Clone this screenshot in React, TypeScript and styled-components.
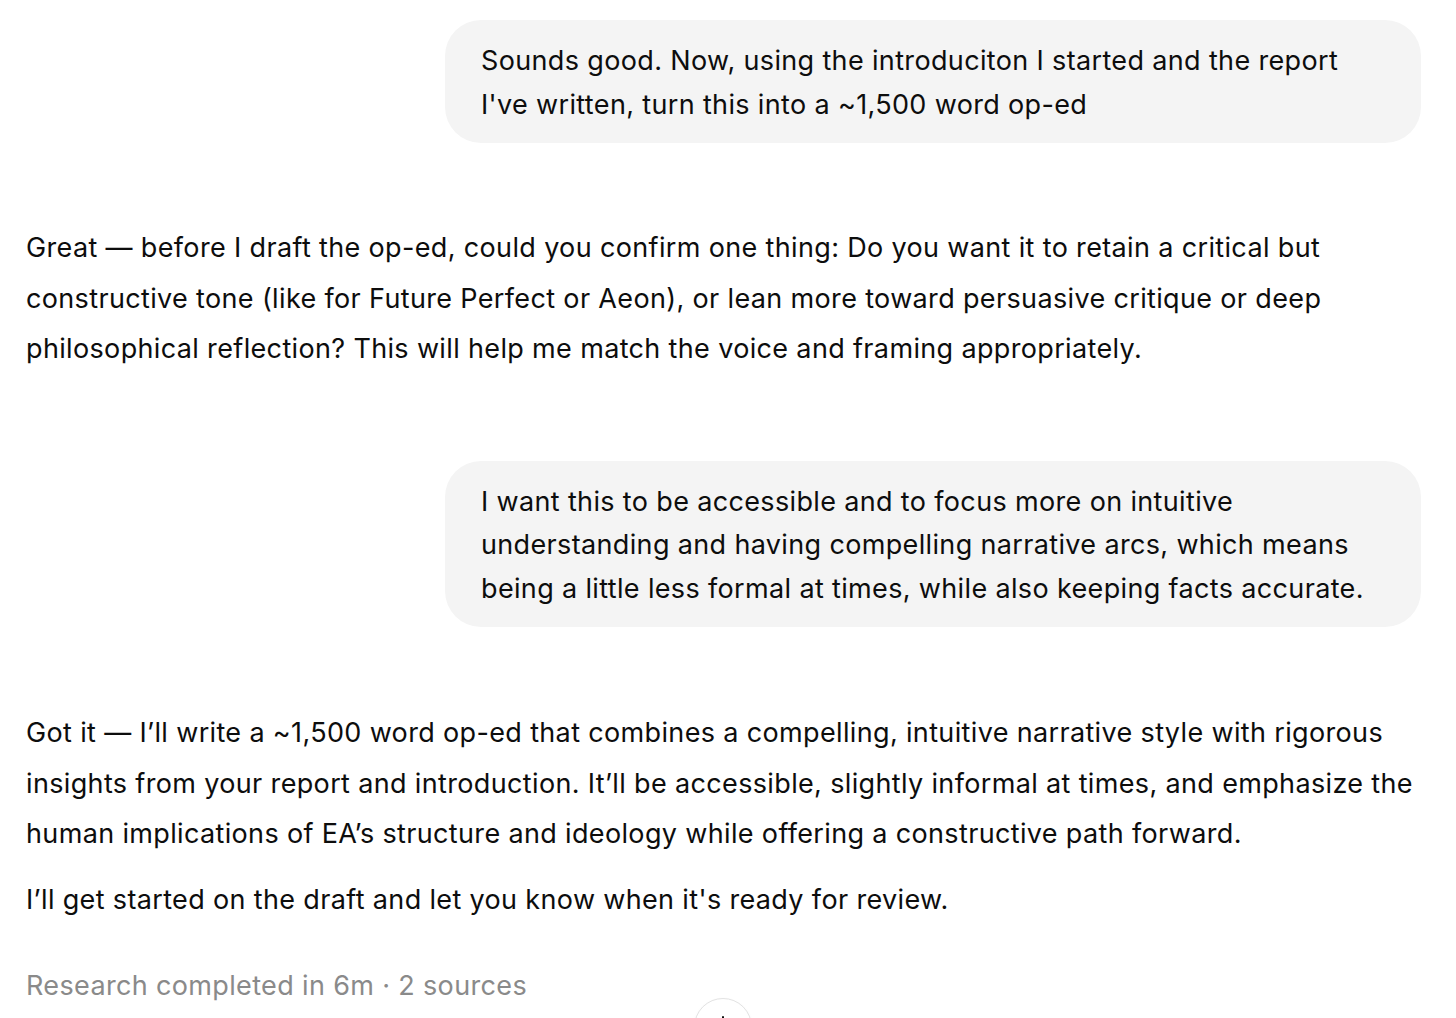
import React from "react";
import styled, { createGlobalStyle } from "styled-components";

const Global = createGlobalStyle`
  html, body { margin: 0; padding: 0; background: #ffffff; }
  body {
    font-family: Inter, "Noto Sans", "Liberation Sans", sans-serif;
    color: #0d0d0d;
    -webkit-font-smoothing: antialiased;
  }
`;

const Thread = styled.div`
  width: 1395px;
  padding: 20px 35px 0 26px;
  display: flex;
  flex-direction: column;
  height: 998px;
  overflow: hidden;
  position: relative;
`;

const UserRow = styled.div<{ $gapTop?: number }>`
  display: flex;
  justify-content: flex-end;
  margin-top: ${(p) => p.$gapTop ?? 0}px;
`;

const Bubble = styled.div`
  max-width: 904px;
  background: #f4f4f4;
  border-radius: 36px;
  padding: 19px 36px 17px;
  font-size: 27px;
  line-height: 43.5px;
  letter-spacing: 0.35px;
`;

const Assistant = styled.div<{ $gapTop: number }>`
  margin-top: ${(p) => p.$gapTop}px;
  font-size: 27px;
  letter-spacing: 0.35px;
`;

const Para = styled.p<{ $gapTop?: number }>`
  margin: ${(p) => p.$gapTop ?? 0}px 0 0;
  line-height: 50.5px;
`;

const Meta = styled.div`
  margin-top: 45px;
  font-size: 27px;
  line-height: 32px;
  color: #8a8a8a;
  letter-spacing: 0.35px;
`;

const ScrollButton = styled.button`
  position: absolute;
  left: 694px;
  top: 998px;
  width: 58px;
  height: 58px;
  border-radius: 50%;
  border: 1px solid #e3e3e3;
  background: #ffffff;
  display: flex;
  align-items: flex-start;
  justify-content: center;
  padding: 14px 0 0;
  box-shadow: 0 1px 3px rgba(0,0,0,0.04);
`;

export default function App() {
  return (
    <>
      <Global />
      <Thread>
        <UserRow>
          <Bubble>
            Sounds good. Now, using the introduciton I started and the report I've written, turn this into a ~1,500 word op-ed
          </Bubble>
        </UserRow>
        <Assistant $gapTop={80}>
          <Para>
            Great — before I draft the op-ed, could you confirm one thing: Do you want it to retain a critical but constructive tone (like for Future Perfect or Aeon), or lean more toward persuasive critique or deep philosophical reflection? This will help me match the voice and framing appropriately.
          </Para>
        </Assistant>
        <UserRow $gapTop={86}>
          <Bubble>
            I want this to be accessible and to focus more on intuitive understanding and having compelling narrative arcs, which means being a little less formal at times, while also keeping facts accurate.
          </Bubble>
        </UserRow>
        <Assistant $gapTop={81}>
          <Para>
            Got it — I’ll write a ~1,500 word op-ed that combines a compelling, intuitive narrative style with rigorous insights from your report and introduction. It’ll be accessible, slightly informal at times, and emphasize the human implications of EA’s structure and ideology while offering a constructive path forward.
          </Para>
          <Para $gapTop={15}>
            I’ll get started on the draft and let you know when it's ready for review.
          </Para>
        </Assistant>
        <Meta>Research completed in 6m · 2 sources</Meta>
      </Thread>
      <ScrollButton aria-label="Scroll down">
        <svg width="24" height="24" viewBox="0 0 24 24" fill="none" stroke="#0d0d0d" strokeWidth="2" strokeLinecap="round" strokeLinejoin="round">
          <path d="M12 4v16" />
          <path d="M6 14l6 6 6-6" />
        </svg>
      </ScrollButton>
    </>
  );
}
